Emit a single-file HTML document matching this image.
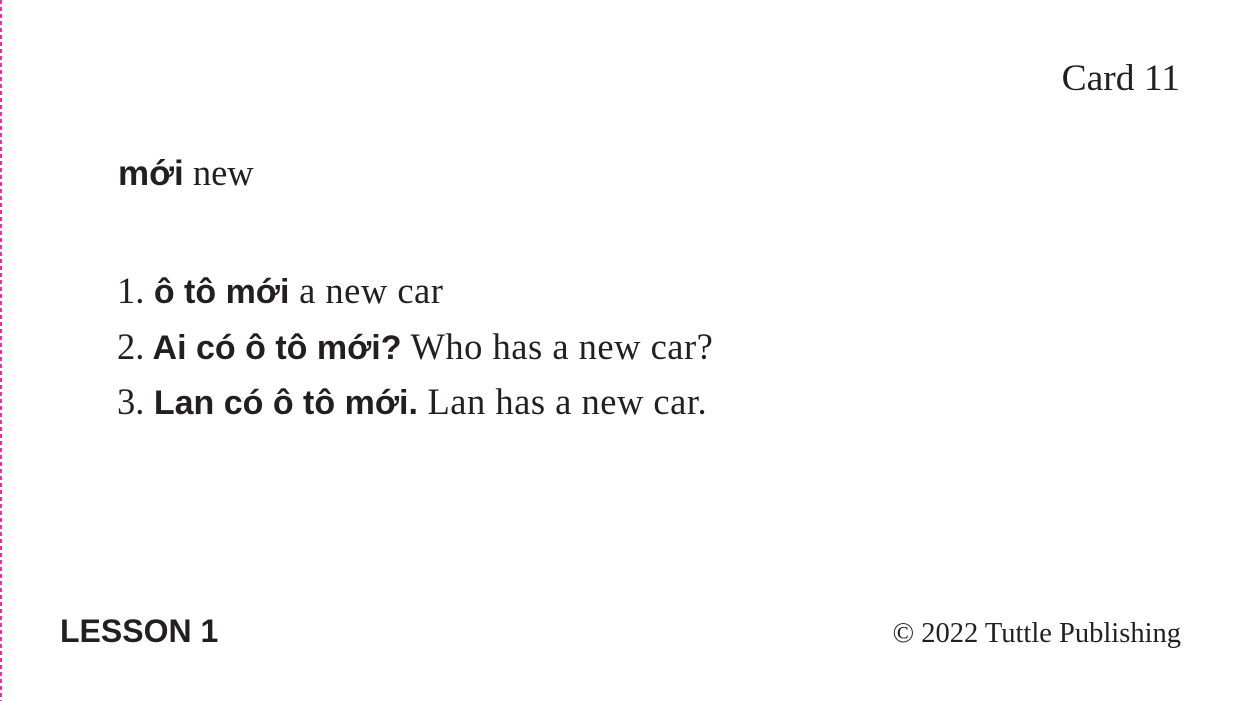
<!DOCTYPE html>
<html><head><meta charset="utf-8"><style>
html,body{margin:0;padding:0;background:#fff;}
body{width:1240px;height:701px;position:relative;overflow:hidden;color:#231f20;}
.dash{position:absolute;left:0;top:0;width:2px;height:701px;background:repeating-linear-gradient(to bottom,#ec2fa8 0 4px,transparent 4px 7px);}
.t{position:absolute;white-space:nowrap;line-height:1;font-family:"Liberation Serif",serif;}
.b{font-family:"Liberation Sans",sans-serif;font-weight:bold;letter-spacing:0;}
.s{letter-spacing:0.5px;}
</style></head><body>
<div class="dash"></div>
<div class="t" style="right:60px;top:60px;font-size:37.5px;">Card 11</div>
<div class="t" style="left:118px;top:155px;font-size:36.5px;"><span class="b" style="font-size:35px">mới</span> new</div>
<div class="t" style="left:117px;top:273px;font-size:36.5px;">1.<span class="b" style="font-size:34px"> ô tô mới</span><span class="s"> a new car</span></div>
<div class="t" style="left:117px;top:329px;font-size:36.5px;">2.<span class="b" style="font-size:34px"> Ai có ô tô mới?</span><span class="s"> Who has a new car?</span></div>
<div class="t" style="left:117px;top:384px;font-size:36.5px;">3.<span class="b" style="font-size:34px"> Lan có ô tô mới.</span><span class="s"> Lan has a new car.</span></div>
<div class="t b" style="left:60px;top:615px;font-size:32px;">LESSON 1</div>
<div class="t" style="right:59px;top:620px;font-size:28.5px;">© 2022 Tuttle Publishing</div>
</body></html>
